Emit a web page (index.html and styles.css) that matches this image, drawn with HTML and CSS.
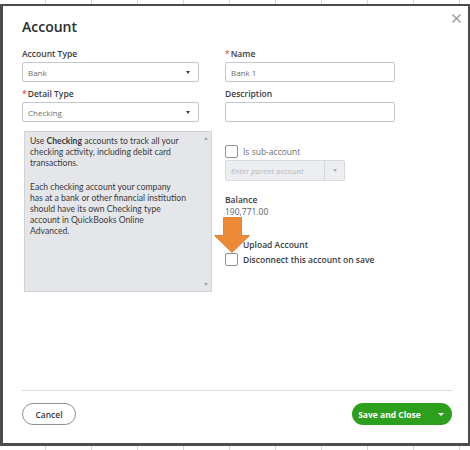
FILE: index.html
```html
<!DOCTYPE html>
<html>
<head>
<meta charset="utf-8">
<title>Account</title>
<link rel="stylesheet" href="styles.css">
</head>
<body>
<div class="modal">
  <button class="close" type="button" aria-label="Close">
    <svg width="9" height="9" viewBox="0 0 9 9"><path d="M0.5 0.5L8.5 8.5M8.5 0.5L0.5 8.5" stroke="#8d9096" stroke-width="1.1" fill="none"/></svg>
  </button>
  <h1 class="title">Account</h1>

  <div class="form">
    <div class="col">
      <div class="lbl">Account Type</div>
      <div class="select"><span>Bank</span><i class="caret"></i></div>
      <div class="lbl lbl-gap"><span class="req">*</span>Detail Type</div>
      <div class="select"><span>Checking</span><i class="caret"></i></div>
      <div class="desc">
        <p>Use <b>Checking</b> accounts to track all your<br>checking activity, including debit card<br>transactions.</p>
        <p>Each checking account your company<br>has at a bank or other financial institution<br>should have its own Checking type<br>account in QuickBooks Online<br>Advanced.</p>
        <i class="sb sb-up"></i>
        <i class="sb sb-down"></i>
      </div>
    </div>

    <div class="col">
      <div class="lbl"><span class="req">*</span>Name</div>
      <div class="input">Bank 1</div>
      <div class="lbl lbl-gap">Description</div>
      <div class="input"></div>

      <div class="check check-sub"><span class="box"></span>Is sub-account</div>
      <div class="parent">
        <span class="ph">Enter parent account</span>
        <span class="pbtn"><i class="caret caret-light"></i></span>
      </div>

      <div class="lbl balance">Balance</div>
      <div class="value">190,771.00</div>

      <div class="upload">
        <div class="check check-strong"><span class="box box-blank"></span>Upload Account</div>
        <div class="check check-strong"><span class="box"></span>Disconnect this account on save</div>
        <svg class="arrow" width="36" height="36" viewBox="0 0 36 36">
          <path d="M9.5 0.5H27.5V18.5H35.5L18 35.5L0.5 18.5H9.5Z" fill="#ee8a35" stroke="#d5772a" stroke-width="0.8"/>
        </svg>
      </div>
    </div>
  </div>

  <div class="footer">
    <button class="btn btn-cancel" type="button">Cancel</button>
    <button class="btn btn-save" type="button">Save and Close<i class="caret caret-white"></i></button>
  </div>
</div>
</body>
</html>
```

FILE: styles.css
```css
* {
  box-sizing: border-box;
}

body {
  margin: 0;
  height: 450px;
  overflow: hidden;
  background: #fff repeating-linear-gradient(to right, transparent 0 45px, #d3d5d8 45px 46px);
  font-family: "Open Sans", "Liberation Sans", sans-serif;
  color: #393a3d;
}

.modal {
  position: relative;
  margin-top: 4px;
  width: 470px;
  height: 442px;
  background: #fff;
  border-style: solid;
  border-color: #4c4c4c;
  border-width: 2px 2px 3px 3px;
  padding: 0 16px 18px 19px;
  display: flex;
  flex-direction: column;
}

.close {
  position: absolute;
  top: 8px;
  right: 7px;
  padding: 0;
  border: 0;
  background: none;
  width: 9px;
  height: 9px;
  display: flex;
}

.title {
  margin: 11px 0 0;
  font-size: 14px;
  line-height: 19px;
  font-weight: 600;
  color: #2b2c2f;
}

.form {
  margin-top: 12px;
  display: grid;
  grid-template-columns: 190px 170px;
  column-gap: 13px;
}

.col {
  display: flex;
  flex-direction: column;
}

.lbl {
  font-size: 8.5px;
  line-height: 12px;
  font-weight: 600;
  color: #393a3d;
}

.lbl-gap {
  margin-top: 6px;
}

.req {
  color: #e0301e;
  margin-right: 1px;
  font-weight: 400;
}

.select,
.input {
  margin-top: 2px;
  height: 20px;
  border: 1px solid #c4c7cc;
  border-radius: 2px;
  font-size: 8px;
  color: #6b6c72;
  display: flex;
  align-items: center;
  padding: 0 5px;
}

.select {
  width: 177px;
  justify-content: space-between;
  padding-right: 8px;
}

.caret {
  width: 0;
  height: 0;
  border-left: 2.5px solid transparent;
  border-right: 2.5px solid transparent;
  border-top: 3px solid #393a3d;
}

.caret-light {
  border-top-color: #a9acb1;
}

.caret-white {
  border-top-color: #fff;
  border-left-width: 3px;
  border-right-width: 3px;
  border-top-width: 3.5px;
  margin-left: 17px;
}

.desc {
  position: relative;
  margin: 9px 0 0 2px;
  width: 188px;
  height: 161px;
  background: #e5e6e9;
  border: 1px solid #cfd2d6;
  padding: 4px 14px 0 5px;
  font-family: Lato, "Open Sans", sans-serif;
  font-size: 8.6px;
  line-height: 11px;
  color: #393a3d;
}

.desc p {
  margin: 0 0 13px;
  white-space: nowrap;
}

.desc b {
  font-weight: 700;
}

.sb {
  position: absolute;
  right: 3px;
  width: 0;
  height: 0;
  border-left: 2.5px solid transparent;
  border-right: 2.5px solid transparent;
}

.sb-up {
  top: 5px;
  border-bottom: 3px solid #a3a6ab;
}

.sb-down {
  bottom: 5px;
  border-top: 3px solid #a3a6ab;
}

.check {
  display: flex;
  align-items: center;
  gap: 5px;
  height: 13px;
  font-size: 8.5px;
  white-space: nowrap;
}

.box {
  width: 13px;
  height: 13px;
  border: 1px solid #8d9096;
  border-radius: 2px;
  background: #fff;
  flex: none;
}

.box-blank {
  border-color: transparent;
  background: none;
}

.check-sub {
  margin-top: 23px;
  color: #6b6c72;
}

.check-strong {
  font-weight: 600;
  color: #393a3d;
}

.parent {
  margin-top: 2px;
  width: 120px;
  height: 21px;
  background: #edeef1;
  border: 1px solid #d6d9dd;
  border-radius: 2px;
  display: flex;
  align-items: center;
}

.ph {
  flex: 1;
  padding-left: 5px;
  font-size: 7.8px;
  font-style: italic;
  color: #b4b7bc;
  white-space: nowrap;
}

.pbtn {
  width: 20px;
  height: 100%;
  border-left: 1px solid #d6d9dd;
  display: flex;
  align-items: center;
  justify-content: center;
}

.balance {
  margin-top: 13px;
}

.value {
  font-size: 8.5px;
  line-height: 12px;
  color: #5a5b60;
}

.upload {
  position: relative;
  margin-top: 20px;
  display: flex;
  flex-direction: column;
  gap: 2px;
}

.arrow {
  position: absolute;
  left: -11px;
  top: -21px;
}

.footer {
  margin-top: auto;
  border-top: 1px solid #dcdee1;
  padding-top: 12px;
  display: flex;
  justify-content: space-between;
}

.btn {
  height: 22px;
  border-radius: 11px;
  font-family: inherit;
  font-size: 8.5px;
  font-weight: 600;
  display: flex;
  align-items: center;
  justify-content: center;
}

.btn-cancel {
  width: 54px;
  background: #fff;
  border: 1px solid #8d9096;
  color: #393a3d;
}

.btn-save {
  width: 100px;
  background: #2ca01c;
  border: 0;
  color: #fff;
  font-weight: 700;
  padding-left: 4px;
}
```
